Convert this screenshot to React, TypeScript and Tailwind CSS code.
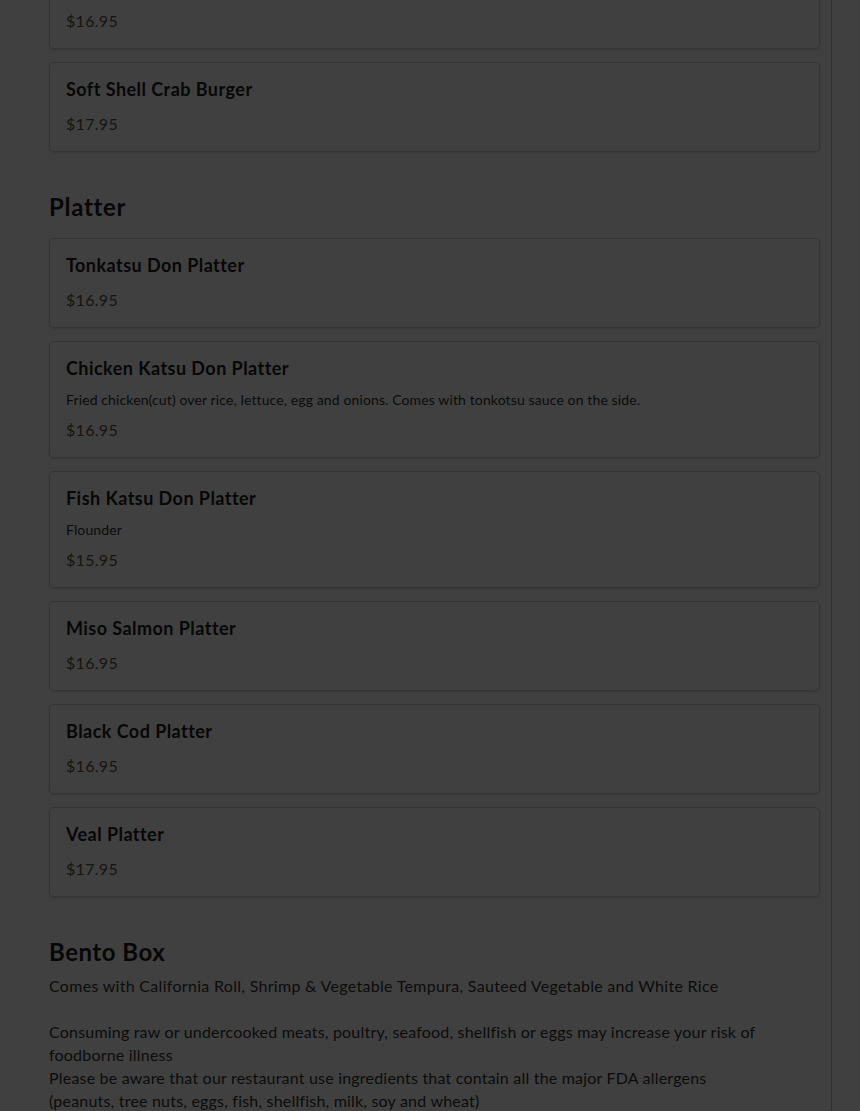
import React from 'react';

interface MenuItem {
  name: string;
  price: string;
  description?: string;
}

const burgers: MenuItem[] = [
  {
    name: 'Chicken Katsu Burger',
    price: '$16.95',
    description: 'Fried chicken cutlet, lettuce, tomato and onions with katsu sauce.',
  },
  { name: 'Soft Shell Crab Burger', price: '$17.95' },
];

const platters: MenuItem[] = [
  { name: 'Tonkatsu Don Platter', price: '$16.95' },
  {
    name: 'Chicken Katsu Don Platter',
    price: '$16.95',
    description:
      'Fried chicken(cut) over rice, lettuce, egg and onions. Comes with tonkotsu sauce on the side.',
  },
  { name: 'Fish Katsu Don Platter', price: '$15.95', description: 'Flounder' },
  { name: 'Miso Salmon Platter', price: '$16.95' },
  { name: 'Black Cod Platter', price: '$16.95' },
  { name: 'Veal Platter', price: '$17.95' },
];

const ItemCard: React.FC<{ item: MenuItem }> = ({ item }) => (
  <div className="rounded-[5px] border border-[#d0d0d0] bg-white px-4 py-[15px] shadow-[0_1px_3px_rgba(0,0,0,0.15)]">
    <h3 className="text-[18px] font-bold leading-[22px] tracking-[0.45px] text-[#1c1c1c]">{item.name}</h3>
    {item.description && (
      <p className="mt-[11px] text-[14px] leading-5 tracking-[0.12px] text-[#333]">{item.description}</p>
    )}
    <p
      className={`${item.description ? 'mt-2' : 'mt-3'} text-[16px] leading-6 tracking-[0.3px] text-[#565840]`}
    >
      {item.price}
    </p>
  </div>
);

export default function App() {
  return (
    <div
      className="relative min-h-[1111px] w-full overflow-hidden bg-white"
      style={{ fontFamily: 'Lato, "Noto Sans", sans-serif' }}
    >
      <div className="flex">
        <main className="min-h-[1111px] w-[832px] border-r border-[#c8c8c8] pl-[49px] pr-[11px]">
          {/* Burgers (tail of previous section) */}
          <div className="-mt-[68px] flex flex-col gap-[13px]">
            {burgers.map((item) => (
              <ItemCard key={item.name} item={item} />
            ))}
          </div>

          {/* Platter */}
          <h2 className="mt-[39px] text-[24px] font-bold leading-8 tracking-[0.7px] text-[#1c1c1c]">Platter</h2>
          <div className="mt-[15px] flex flex-col gap-[13px]">
            {platters.map((item) => (
              <ItemCard key={item.name} item={item} />
            ))}
          </div>

          {/* Bento Box */}
          <h2 className="mt-[39px] text-[24px] font-bold leading-8 tracking-[0.5px] text-[#1c1c1c]">Bento Box</h2>
          <div className="mt-[6px] pr-12 text-[16px] leading-[23px] text-[#333]">
            <p className="tracking-[0.3px]">
              Comes with California Roll, Shrimp &amp; Vegetable Tempura, Sauteed Vegetable and White Rice
            </p>
            <p className="mt-[23px] tracking-[0.2px]">
              Consuming raw or undercooked meats, poultry, seafood, shellfish or eggs may increase your risk of
              foodborne illness
            </p>
            <p className="tracking-[0.2px]">
              Please be aware that our restaurant use ingredients that contain all the major FDA allergens
              (peanuts, tree nuts, eggs, fish, shellfish, milk, soy and wheat)
            </p>
          </div>
        </main>
        <div className="flex-1" />
      </div>

      {/* Modal backdrop */}
      <div className="fixed inset-0 bg-black/75" />
    </div>
  );
}
